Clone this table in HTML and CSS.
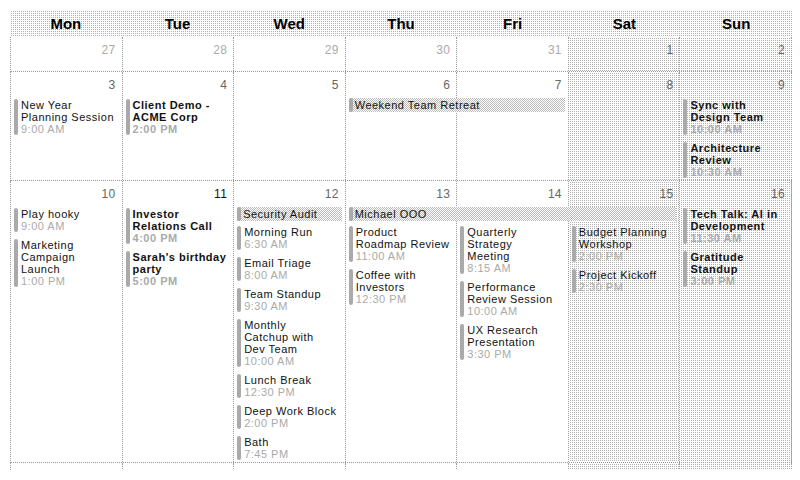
FILE: index.html
```html
<!DOCTYPE html>
<html>
<head>
<meta charset="utf-8">
<link rel="stylesheet" href="styles.css">
</head>
<body>
<div class="calendar">
  <div class="head dots">
    <div class="hd">Mon</div><div class="hd">Tue</div><div class="hd">Wed</div><div class="hd">Thu</div><div class="hd">Fri</div><div class="hd">Sat</div><div class="hd">Sun</div>
  </div>

  <div class="week">
    <div class="day c1"></div><div class="day c2"></div><div class="day c3"></div><div class="day c4"></div><div class="day c5"></div><div class="day c6 dots"></div><div class="day c7 dots"></div>
    <div class="num c1 out">27</div><div class="num c2 out">28</div><div class="num c3 out">29</div><div class="num c4 out">30</div><div class="num c5 out">31</div><div class="num c6">1</div><div class="num c7">2</div>
  </div>

  <div class="week">
    <div class="day c1"></div><div class="day c2"></div><div class="day c3"></div><div class="day c4"></div><div class="day c5"></div><div class="day c6 dots"></div><div class="day c7 dots"></div>
    <div class="num c1">3</div><div class="num c2">4</div><div class="num c3">5</div><div class="num c4">6</div><div class="num c5">7</div><div class="num c6">8</div><div class="num c7">9</div>
    <div class="span s4-6">Weekend Team Retreat</div>
    <div class="events c1 full">
      <div class="ev"><div class="tx"><div class="ti">New Year<br>Planning Session</div><div class="tm">9:00 AM</div></div></div>
    </div>
    <div class="events c2 full">
      <div class="ev bold"><div class="tx"><div class="ti">Client Demo -<br>ACME Corp</div><div class="tm">2:00 PM</div></div></div>
    </div>
    <div class="events c7 full">
      <div class="ev bold"><div class="tx"><div class="ti">Sync with<br>Design Team</div><div class="tm">10:00 AM</div></div></div>
      <div class="ev bold"><div class="tx"><div class="ti">Architecture<br>Review</div><div class="tm">10:30 AM</div></div></div>
    </div>
  </div>

  <div class="week">
    <div class="day c1"></div><div class="day c2"></div><div class="day c3"></div><div class="day c4"></div><div class="day c5"></div><div class="day c6 dots"></div><div class="day c7 dots"></div>
    <div class="num c1">10</div><div class="num c2 today">11</div><div class="num c3">12</div><div class="num c4">13</div><div class="num c5">14</div><div class="num c6">15</div><div class="num c7">16</div>
    <div class="span s3-4">Security Audit</div>
    <div class="span s4-7">Michael OOO</div>
    <div class="events c1 full">
      <div class="ev"><div class="tx"><div class="ti">Play hooky</div><div class="tm">9:00 AM</div></div></div>
      <div class="ev"><div class="tx"><div class="ti">Marketing<br>Campaign<br>Launch</div><div class="tm">1:00 PM</div></div></div>
    </div>
    <div class="events c2 full">
      <div class="ev bold"><div class="tx"><div class="ti">Investor<br>Relations Call</div><div class="tm">4:00 PM</div></div></div>
      <div class="ev bold"><div class="tx"><div class="ti">Sarah's birthday<br>party</div><div class="tm">5:00 PM</div></div></div>
    </div>
    <div class="events c3 below">
      <div class="ev"><div class="tx"><div class="ti">Morning Run</div><div class="tm">6:30 AM</div></div></div>
      <div class="ev"><div class="tx"><div class="ti">Email Triage</div><div class="tm">8:00 AM</div></div></div>
      <div class="ev"><div class="tx"><div class="ti">Team Standup</div><div class="tm">9:30 AM</div></div></div>
      <div class="ev"><div class="tx"><div class="ti">Monthly<br>Catchup with<br>Dev Team</div><div class="tm">10:00 AM</div></div></div>
      <div class="ev"><div class="tx"><div class="ti">Lunch Break</div><div class="tm">12:30 PM</div></div></div>
      <div class="ev"><div class="tx"><div class="ti">Deep Work Block</div><div class="tm">2:00 PM</div></div></div>
      <div class="ev"><div class="tx"><div class="ti">Bath</div><div class="tm">7:45 PM</div></div></div>
    </div>
    <div class="events c4 below">
      <div class="ev"><div class="tx"><div class="ti">Product<br>Roadmap Review</div><div class="tm">11:00 AM</div></div></div>
      <div class="ev"><div class="tx"><div class="ti">Coffee with<br>Investors</div><div class="tm">12:30 PM</div></div></div>
    </div>
    <div class="events c5 below">
      <div class="ev"><div class="tx"><div class="ti">Quarterly<br>Strategy<br>Meeting</div><div class="tm">8:15 AM</div></div></div>
      <div class="ev"><div class="tx"><div class="ti">Performance<br>Review Session</div><div class="tm">10:00 AM</div></div></div>
      <div class="ev"><div class="tx"><div class="ti">UX Research<br>Presentation</div><div class="tm">3:30 PM</div></div></div>
    </div>
    <div class="events c6 below">
      <div class="ev"><div class="tx"><div class="ti">Budget Planning<br>Workshop</div><div class="tm">2:00 PM</div></div></div>
      <div class="ev"><div class="tx"><div class="ti">Project Kickoff</div><div class="tm">2:30 PM</div></div></div>
    </div>
    <div class="events c7 full">
      <div class="ev bold"><div class="tx"><div class="ti">Tech Talk: AI in<br>Development</div><div class="tm">11:30 AM</div></div></div>
      <div class="ev bold"><div class="tx"><div class="ti">Gratitude<br>Standup</div><div class="tm">3:00 PM</div></div></div>
    </div>
  </div>

  <div class="week">
    <div class="day c1"></div><div class="day c2"></div><div class="day c3"></div><div class="day c4"></div><div class="day c5"></div><div class="day c6 dots"></div><div class="day c7 dots"></div>
  </div>
</div>
</body>
</html>
```

FILE: styles.css
```css
* { box-sizing: border-box; }
html, body { margin: 0; padding: 0; background: #fff; }
body {
  padding: 10px 0 0 10px;
  font-family: "Liberation Sans", Arial, sans-serif;
  font-size: 11px;
  line-height: 12px;
  letter-spacing: 0.5px;
  color: #111;
}
.calendar {
  width: 782px;
  height: 460px;
  overflow: hidden;
}
.dots {
  background-color: #b0b0b0;
  background-image:
    linear-gradient(90deg, #fff 1px, transparent 1px),
    linear-gradient(#fff 1px, transparent 1px);
  background-size: 2px 2px;
}
.head {
  display: grid;
  grid-template-columns: repeat(7, 1fr);
  height: 27px;
}
.hd {
  text-align: center;
  font-weight: bold;
  font-size: 15px;
  line-height: 27px;
  letter-spacing: 0;
  color: #000;
}
.week {
  display: grid;
  grid-template-columns: repeat(7, 1fr);
  grid-template-rows: auto auto 1fr;
  min-height: 35px;
  border-left: 1px dotted #999;
  border-bottom: 1px dotted #999;
}
.c1 { grid-column: 1; }
.c2 { grid-column: 2; }
.c3 { grid-column: 3; }
.c4 { grid-column: 4; }
.c5 { grid-column: 5; }
.c6 { grid-column: 6; }
.c7 { grid-column: 7; }
.day {
  grid-row: 1 / -1;
  border-right: 1px dotted #999;
}
.num {
  grid-row: 1;
  text-align: right;
  padding: 7px 7px 7px 0;
  font-size: 12px;
  letter-spacing: 0.3px;
  color: #666;
  position: relative;
}
.num.out { color: #aaa; }
.num.today { color: #111; }
.span {
  grid-row: 2;
  position: relative;
  display: flex;
  align-items: center;
  height: 14px;
  margin: 0 4px 4px 3px;
  background: repeating-conic-gradient(#bbb 0 25%, #fff 0 50%) 0 0 / 2px 2px;
  color: #111;
  white-space: nowrap;
}
.span::before {
  content: "";
  align-self: stretch;
  width: 4px;
  margin-right: 2px;
  border-radius: 2px;
  background: #aaa;
}
.s3-4 { grid-column: 3 / 4; }
.s4-6 { grid-column: 4 / 6; }
.s4-7 { grid-column: 4 / 7; }
.events {
  position: relative;
  display: flex;
  flex-direction: column;
  gap: 5px;
  padding: 0 4px 1px 3px;
}
.events.full { grid-row: 2 / 4; }
.events.below { grid-row: 3 / 4; }
.ev {
  display: flex;
  gap: 3px;
  padding: 1px 0;
}
.ev::before {
  content: "";
  flex: none;
  width: 4px;
  border-radius: 2px;
  background: #aaa;
}
.ti {
  white-space: nowrap;
  color: #111;
}
.tm { color: #aaa; }
.ev.bold .ti, .ev.bold .tm { font-weight: bold; }
```
